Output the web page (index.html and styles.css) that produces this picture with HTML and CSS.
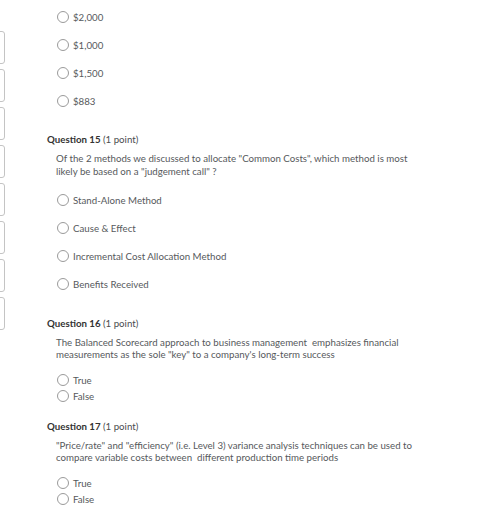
FILE: index.html
```html
<!DOCTYPE html>
<html>
<head>
<meta charset="utf-8">
<link rel="stylesheet" href="styles.css">
</head>
<body>
<div class="page">
  <div class="side">
    <div class="tab"></div><div class="tab"></div><div class="tab"></div><div class="tab"></div>
    <div class="tab"></div><div class="tab"></div><div class="tab"></div><div class="tab"></div>
  </div>
  <div class="main">
    <div class="opts spaced first">
      <div class="opt"><span class="radio"></span><span>$2,000</span></div>
      <div class="opt"><span class="radio"></span><span>$1,000</span></div>
      <div class="opt"><span class="radio"></span><span>$1,500</span></div>
      <div class="opt"><span class="radio"></span><span>$883</span></div>
    </div>

    <div class="q q15">
      <div class="qh"><b>Question 15</b> (1 point)</div>
      <p class="qt">Of the 2 methods we discussed to allocate "Common Costs", which method is most<br>likely be based on a "judgement call" ?</p>
      <div class="opts spaced">
        <div class="opt"><span class="radio"></span><span>Stand-Alone Method</span></div>
        <div class="opt"><span class="radio"></span><span>Cause &amp; Effect</span></div>
        <div class="opt"><span class="radio"></span><span>Incremental Cost Allocation Method</span></div>
        <div class="opt"><span class="radio"></span><span>Benefits Received</span></div>
      </div>
    </div>

    <div class="q q16">
      <div class="qh"><b>Question 16</b> (1 point)</div>
      <p class="qt">The Balanced Scorecard approach to business management&nbsp; emphasizes financial<br>measurements as the sole "key" to a company's long-term success</p>
      <div class="opts">
        <div class="opt"><span class="radio"></span><span>True</span></div>
        <div class="opt"><span class="radio"></span><span>False</span></div>
      </div>
    </div>

    <div class="q q17">
      <div class="qh"><b>Question 17</b> (1 point)</div>
      <p class="qt">"Price/rate" and "efficiency" (i.e. Level 3) variance analysis techniques can be used to<br>compare variable costs between&nbsp; different production time periods</p>
      <div class="opts">
        <div class="opt"><span class="radio"></span><span>True</span></div>
        <div class="opt"><span class="radio"></span><span>False</span></div>
      </div>
    </div>
  </div>
</div>
</body>
</html>
```

FILE: styles.css
```css
html, body {
  margin: 0;
  padding: 0;
  background: #fff;
}
body {
  font-family: Lato, "Liberation Sans", sans-serif;
  font-size: 9.7px;
  color: #56595c;
}
.page {
  display: flex;
  align-items: flex-start;
}
.side {
  width: 6px;
  padding-top: 31px;
  display: flex;
  flex-direction: column;
  gap: 5px;
  overflow: hidden;
  flex: none;
}
.tab {
  width: 14px;
  height: 31px;
  margin-left: -11px;
  border: 1px solid #c4c4c4;
  border-radius: 3px;
  flex: none;
}
.main {
  margin-left: 41px;
  flex: 1;
}
.opts {
  padding-left: 10px;
  display: flex;
  flex-direction: column;
}
.opts.first {
  padding-top: 9px;
}
.opts.spaced {
  gap: 12px;
}
.opt {
  display: flex;
  align-items: center;
  height: 16px;
  line-height: 16px;
}
.radio {
  width: 10px;
  height: 10px;
  border: 1px solid #9a9a9a;
  border-radius: 50%;
  margin-right: 4px;
  flex: none;
  background: #fff;
}
.q {
  display: flex;
  flex-direction: column;
}
.qh {
  line-height: 14px;
  color: #494c4e;
}
.qh b {
  font-weight: 700;
  color: #333;
}
.qt {
  margin: 6px 0 0 9px;
  line-height: 13px;
}
.q16 .qt, .q17 .qt { line-height: 12px; }
.q15 { margin-top: 23px; }
.q15 .opts { margin-top: 14px; }
.q16 { margin-top: 24px; }
.q16 .opts { margin-top: 12px; }
.q17 { margin-top: 15px; }
.q17 .opts { margin-top: 12px; }
```
